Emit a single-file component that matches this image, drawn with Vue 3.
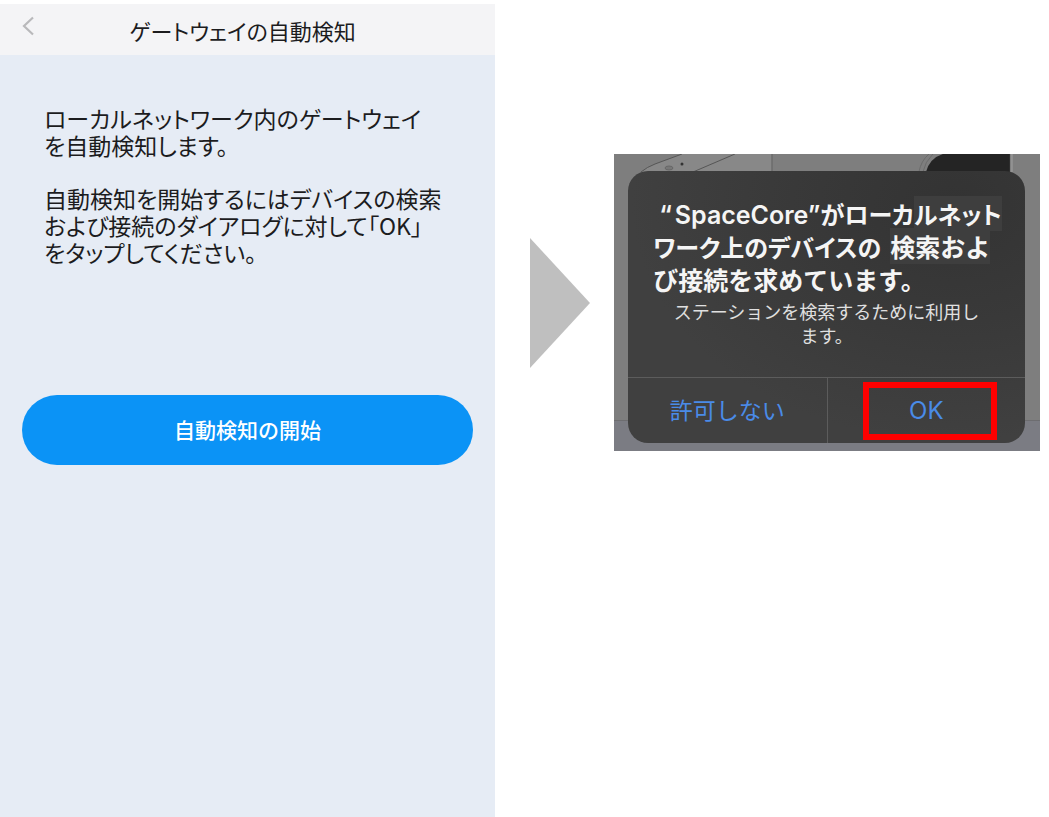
<script setup>
const intro = ['ローカルネットワーク内のゲートウェイ', 'を自動検知します。']
const guide = [
  '自動検知を開始するにはデバイスの検索',
  'および接続のダイアログに対して「OK」',
  'をタップしてください。'
]
</script>

<template>
  <main class="page">
    <section class="phone">
      <header class="bar">
        <button class="back" type="button" aria-label="戻る">
          <svg viewBox="0 0 12 20" width="12" height="20" aria-hidden="true">
            <path d="M11 1.5 2 10l9 8.500" fill="none" stroke="#b9b9bb" stroke-width="2.200" />
          </svg>
        </button>
        <h1 class="title">ゲートウェイの自動検知</h1>
      </header>
      <div class="copy">
        <p><span v-for="line in intro" :key="line" class="line">{{ line }}</span></p>
        <p><span v-for="line in guide" :key="line" class="line">{{ line }}</span></p>
      </div>
      <button class="start" type="button">自動検知の開始</button>
    </section>

    <section class="flow">
      <svg class="arrow" viewBox="0 0 60 130" aria-hidden="true">
        <path d="M0 0 60 65 0 130Z" fill="#bfbfbf" />
      </svg>
      <div class="backdrop">
        <svg class="device" viewBox="0 0 426 18" preserveAspectRatio="none" aria-hidden="true">
          <path d="M66 0H158V18H27Q33 13 41 10Z" fill="#888" />
          <path d="M27 18Q33 13 41 10L68 0M79 18 121 0" fill="none" stroke="#555" stroke-width="1" />
          <path d="M158 0V18" stroke="#626262" stroke-width="1" />
          <ellipse cx="55" cy="14" rx="4" ry="2" fill="#777" stroke="#666" />
          <circle cx="68" cy="10" r="1.500" fill="#333" />
          <path d="M305 18Q307 7 315 0M309 18Q311 8 319 0" fill="none" stroke="#6b6b6b" />
          <path d="M312 18Q316 4 329 0H396V18Z" fill="#242424" />
          <path d="M398 0V18" stroke="#929292" stroke-width="2" />
        </svg>
        <div class="dialog" role="dialog" aria-labelledby="dialog-title" aria-describedby="dialog-text">
          <h2 id="dialog-title" class="heading">
            <span class="line first"><span class="latin">“</span><span class="latin name">SpaceCore”</span><span class="tight">がローカ</span><span class="tight patch">ルネット</span></span>
            <span class="line"><span class="tight">ワーク上のデバイスの</span><span class="patch second">検索およ</span></span>
            <span class="line">び接続を求めています。</span>
          </h2>
          <p id="dialog-text" class="message">ステーションを検索するために利用します。</p>
          <div class="actions">
            <button class="action" type="button">許可しない</button>
            <button class="action ok" type="button">OK</button>
          </div>
        </div>
      </div>
    </section>
  </main>
</template>

<style>
body {
  margin: 0;
  background: #fff;
}
</style>

<style scoped>
.page {
  display: grid;
  grid-template-columns: 47.2% 1fr;
  min-height: 100vh;
  font-family: "Noto Sans CJK JP", sans-serif;
}
h1,
h2,
p {
  margin: 0;
}
button {
  margin: 0;
  padding: 0;
  border: 0;
  background: none;
  font-family: inherit;
  cursor: pointer;
}
.line {
  display: block;
  white-space: nowrap;
}
.phone {
  display: flex;
  flex-direction: column;
  margin-top: 4px;
  background: #e6ecf5;
}
.bar {
  display: grid;
  grid-template-columns: 56px 1fr 66px;
  height: 51px;
  background: #f4f4f6;
}
.back {
  display: flex;
  align-items: flex-start;
  padding: 12px 0 0 22px;
}
.title {
  text-align: center;
  font-size: 22px;
  font-weight: 400;
  line-height: 52px;
  color: #1c1c1e;
  font-feature-settings: "palt";
}
.copy {
  display: grid;
  gap: 26px;
  padding: 50px 24px 0 44px;
  font-size: 23px;
  line-height: 27px;
  color: #1c1c1e;
  font-feature-settings: "palt";
}
.start {
  height: 70px;
  margin: 129px 22px 0;
  padding-bottom: 2px;
  border-radius: 35px;
  background: #0b93f6;
  color: #fff;
  font-size: 21px;
  font-weight: 500;
}
.flow {
  display: flex;
  align-items: center;
  align-self: start;
  gap: 24px;
  padding: 154px 9px 0 35px;
}
.arrow {
  flex: none;
  width: 60px;
  height: 130px;
}
.backdrop {
  position: relative;
  flex: 1;
  min-width: 0;
  padding: 17px 15px 8px 14px;
  background: linear-gradient(to top, #7b7c83 30px, #6d6d70 30px, #6d6d70 31px, #7e7e7e 31px);
}
.device {
  position: absolute;
  top: 0;
  left: 0;
  width: 100%;
  height: 18px;
}
.dialog {
  position: relative;
  overflow: hidden;
  border-radius: 20px;
  background: radial-gradient(ellipse at 82% 12%, #333 0, #393939 35%, #404040 70%);
  color: #f5f5f5;
}
.heading {
  padding: 26px 0 0 25px;
  font-size: 25px;
  font-weight: 700;
  line-height: 33px;
}
.heading .line {
  height: 33px;
}
.first {
  padding-left: 6px;
}
.latin {
  font-family: Inter, "Noto Sans CJK JP", sans-serif;
  font-weight: 600;
}
.name {
  margin-left: 3px;
}
.tight {
  font-size: 24px;
  font-feature-settings: "palt";
}
.patch {
  background: #3e3e3e;
}
.second {
  margin-left: 9px;
}
.message {
  padding: 3px 45px 30px;
  text-align: center;
  font-size: 18px;
  line-height: 24px;
  color: #e0e0e0;
}
.actions {
  display: grid;
  grid-template-columns: 1fr 1fr;
  border-top: 1px solid #5c5c5c;
}
.action {
  position: relative;
  height: 65px;
  padding-bottom: 4px;
  color: #4a8be8;
  font-size: 23px;
}
.action + .action {
  border-left: 1px solid #5c5c5c;
}
.ok {
  padding-bottom: 0;
  font-family: Inter, sans-serif;
  font-size: 24px;
}
.ok::after {
  content: "";
  position: absolute;
  inset: 4px 28px 3px 35px;
  border: 6px solid #f00;
}
</style>
